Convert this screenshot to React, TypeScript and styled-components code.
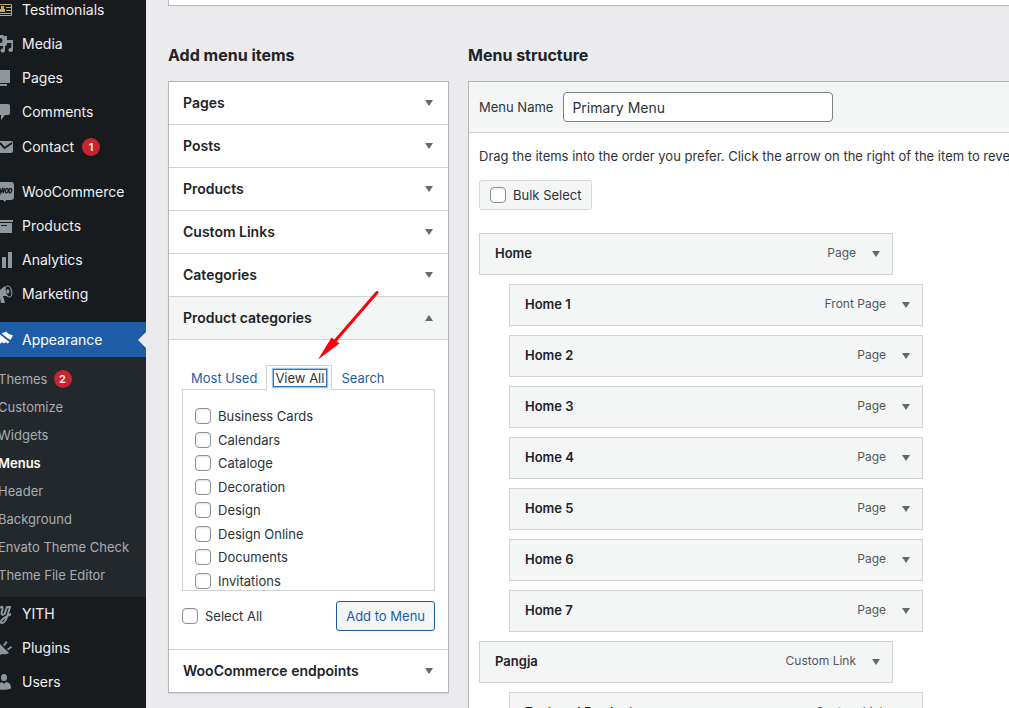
import React from "react";
import styled, { createGlobalStyle, css } from "styled-components";

const GlobalStyle = createGlobalStyle`
  * { box-sizing: border-box; }
  html, body, #root { height: 100%; }
  body {
    margin: 0;
    overflow: hidden;
    background: #ebebed;
    color: #2c3338;
    font: 13px/20px Inter, "Liberation Sans", sans-serif;
  }
  button, input { font: inherit; color: inherit; }
  ul, h2, h3, p { margin: 0; padding: 0; }
  ul { list-style: none; }
`;

const Page = styled.div`
  display: flex;
  height: 100vh;
  overflow: hidden;
`;

const Sidebar = styled.nav`
  flex: none;
  width: 146px;
  margin-top: -7px;
  background: #171b1e;
  overflow: hidden;
`;

const MenuGroup = styled.ul`
  padding-bottom: 11px;
`;

const MenuLink = styled.a<{ $current?: boolean; $tall?: boolean }>`
  position: relative;
  display: flex;
  align-items: center;
  gap: 8px;
  height: ${(p) => (p.$current || p.$tall ? 35 : 34)}px;
  color: ${(p) => (p.$current ? "#fff" : "#f0f0f1")};
  background: ${(p) => (p.$current ? "#1e5da6" : "transparent")};
  font-size: 14px;
  text-decoration: none;
  ${(p) =>
    p.$current &&
    css`
      &::after {
        content: "";
        position: absolute;
        right: 0;
        border: 8px solid transparent;
        border-left: 0;
        border-right-color: #ebebed;
      }
    `}
`;

const MenuIcon = styled.svg`
  flex: none;
  width: 14px;
  height: 20px;
  fill: #8f979e;
`;

const Count = styled.span`
  min-width: 18px;
  height: 18px;
  border-radius: 9px;
  background: #ca2330;
  color: #fff;
  font-size: 11px;
  font-weight: 600;
  line-height: 18px;
  text-align: center;
`;

const Submenu = styled.ul`
  padding: 8px 0;
  background: #23282c;
`;

const SubLink = styled.a<{ $current?: boolean }>`
  display: flex;
  align-items: center;
  gap: 6px;
  height: 28px;
  margin-left: -2px;
  color: ${(p) => (p.$current ? "#fff" : "#a9adb2")};
  font-weight: ${(p) => (p.$current ? 600 : 400)};
  text-decoration: none;
  white-space: nowrap;
`;

const Content = styled.main`
  flex: 1;
  min-width: 0;
  padding-left: 22px;
`;

const Notice = styled.div`
  height: 6px;
  background: #fff;
  border: 1px solid #b4b6b9;
  border-width: 0 0 1px 1px;
`;

const Columns = styled.div`
  display: grid;
  grid-template-columns: 281px minmax(0, 1fr);
  column-gap: 19px;
  padding-top: 37px;
`;

const Title = styled.h2`
  margin-bottom: 14px;
  color: #1d2327;
  font-size: 16px;
  font-weight: 700;
  line-height: 24px;
`;

const Accordion = styled.div`
  background: #fff;
  border: 1px solid #b4b6b9;
  box-shadow: 0 1px 1px rgba(0, 0, 0, 0.1);
`;

const Section = styled.section`
  & + & { border-top: 1px solid #d0d2d4; }
`;

const SectionButton = styled.button<{ $open?: boolean }>`
  display: flex;
  align-items: center;
  justify-content: space-between;
  width: 100%;
  height: 42px;
  padding: 0 15px 0 14px;
  border: 0;
  background: ${(p) => (p.$open ? "#f4f6f6" : "#fff")};
  color: #1d2327;
  font-size: 14px;
  font-weight: 600;
  text-align: left;
`;

const Arrow = styled.span<{ $up?: boolean }>`
  flex: none;
  width: 0;
  border: solid transparent;
  border-width: ${(p) => (p.$up ? "0 4px 6px" : "6px 4px 0")};
  border-${(p) => (p.$up ? "bottom" : "top")}-color: #646970;
`;

const SectionBody = styled.div`
  padding: 25px 13px 18px;
  border-top: 1px solid #d0d2d4;
`;

const TabBar = styled.div`
  position: relative;
  display: flex;
  align-items: flex-end;
  margin-bottom: -1px;
`;

const Tab = styled.button<{ $active?: boolean }>`
  position: relative;
  height: 25px;
  padding: 0 8px 1px;
  border: 1px solid transparent;
  border-bottom: 0;
  background: none;
  color: #1e5da6;
  ${(p) =>
    p.$active &&
    css`
      padding: 0 4px 1px 6px;
      border-color: #d0d2d4;
      background: #fff;
      color: #2c3338;
    `}
`;

const FocusRing = styled.span`
  display: block;
  padding: 0 2px 0 1px;
  border: 1px solid #2f74cc;
  box-shadow: 0 0 1px 1px #9cc0ea;
  line-height: 16px;
`;

const CheckPanel = styled.ul`
  height: 202px;
  padding: 16px 12px 0;
  border: 1px solid #d0d2d4;
  overflow: hidden;
`;

const CheckRow = styled.li`
  height: 24px;
  &:nth-child(even) { height: 23px; }
`;

const CheckLabel = styled.label`
  display: flex;
  align-items: center;
  gap: 7px;
`;

const Checkbox = styled.input.attrs({ type: "checkbox" })`
  appearance: none;
  flex: none;
  width: 16px;
  height: 16px;
  margin: 0;
  border: 1px solid #8c8f94;
  border-radius: 4px;
  background: #fff;
  box-shadow: inset 0 1px 2px rgba(0, 0, 0, 0.1);
`;

const Actions = styled.div`
  display: flex;
  align-items: center;
  justify-content: space-between;
  margin-top: 10px;
`;

const AddButton = styled.button`
  height: 30px;
  padding: 0 9px;
  border: 1px solid #1e5da6;
  border-radius: 3px;
  background: #f4f6f6;
  color: #1e5da6;
`;

const Editor = styled.div`
  border: 1px solid #b4b6b9;
  border-right: 0;
  background: #fff;
`;

const EditorHeader = styled.label`
  display: flex;
  align-items: center;
  gap: 10px;
  height: 51px;
  padding-left: 10px;
  border-bottom: 1px solid #d0d2d4;
  background: #f4f6f6;
`;

const NameInput = styled.input`
  width: 270px;
  height: 30px;
  padding: 0 8px;
  border: 1px solid #7d8187;
  border-radius: 4px;
  background: #fff;
  color: #2c3338;
  font-size: 14px;
`;

const EditorBody = styled.div`
  padding: 13px 0 0 10px;
`;

const Hint = styled.p`
  white-space: nowrap;
`;

const BulkSelect = styled.label`
  display: inline-flex;
  align-items: center;
  gap: 7px;
  height: 30px;
  margin: 14px 0 23px;
  padding: 0 10px;
  border: 1px solid #d6d8da;
  border-radius: 3px;
  background: #f4f6f6;
`;

const ItemList = styled.ul`
  display: flex;
  flex-direction: column;
  gap: 9px;
`;

const Item = styled.li<{ $child?: boolean }>`
  display: flex;
  align-items: center;
  gap: 16px;
  width: 414px;
  height: 42px;
  margin-left: ${(p) => (p.$child ? 30 : 0)}px;
  padding: 0 12px 2px 15px;
  border: 1px solid #d0d2d4;
  background: #f4f6f6;
  color: #50575e;
  font-size: 12px;
`;

const ItemTitle = styled.h3`
  flex: 1;
  color: #1d2327;
  font-size: 13px;
  font-weight: 600;
`;

const ItemToggle = styled.button`
  display: flex;
  padding: 1px 0 0;
  border: 0;
  background: none;
`;

const Pointer = styled.svg`
  position: absolute;
  left: 134px;
  bottom: 29px;
  width: 64px;
  height: 71px;
  fill: #fb0007;
  stroke: #fb0007;
  pointer-events: none;
`;

const icons: Record<string, React.ReactNode> = {
  testimonials: (
    <g fill="none" stroke="#c9a95a" strokeWidth="1">
      <path d="M0 4.500H11.500V15.500H0M6 7.500H11M6 10.500H11M0 13.500H11" />
      <path d="M0 11V9h1V6h3v3h1v3H0z" fill="#c9a95a" stroke="none" />
    </g>
  ),
  media: (
    <>
      <path d="M0 1h3l1 1h3v8l-1 2H0V9a2.500 2.500 0 0 0 0-5z" />
      <path d="M7.500 6H13v10a2.300 2 0 1 1-1.700-2V9H9.200l-3 0V6zM3 12h2v5a2.300 2 0 1 1-2-2.500z" />
    </>
  ),
  pages: <path d="M0 2h10v13H0zM0 16h7v2H0z" />,
  comments: <path d="M0 2h8q2 0 2 2v7q0 2-2 2H5l-4 5v-5H0z" />,
  contact: (
    <>
      <path d="M0 4h11q2 0 2 2v8q0 2-2 2H0z" />
      <path d="M0 6l4.500 5L12 6" fill="none" stroke="#171b1e" strokeWidth="2" />
    </>
  ),
  woo: (
    <>
      <path d="M0 0h11q3 0 3 3v12q0 3-3 3H6l-1 2-2-2H0z" />
      <path
        d="M0 6l.8 5 1.700-4 .8 4L4.500 6M6.800 6.500q1.600 0 1.400 2T6.500 11q-1.300-.2-1-2.300t1.300-2.200M10.300 6.500q1.600 0 1.400 2T10 11q-1.300-.2-1-2.300t1.300-2.200"
        fill="none"
        stroke="#171b1e"
        strokeWidth="1.300"
      />
    </>
  ),
  products: <path d="M0 4h13v2H0zM0 7h12v10H0zM1 9v1h6V9z" fillRule="evenodd" />,
  analytics: <path d="M2 7h4v11H2zM8 2h4v16H8z" />,
  marketing: (
    <>
      <path d="M0 6l5-4q-1 6 3 10l-5 0 2 7H1l-1-5z" />
      <ellipse cx="8.500" cy="7.500" rx="3.200" ry="5.600" fill="none" stroke="#8f979e" strokeWidth="1.200" transform="rotate(-12 8.500 7.500)" />
      <ellipse cx="7.800" cy="7.500" rx="1.500" ry="2.200" />
    </>
  ),
  appearance: (
    <g fill="#fff">
      <path d="M1.500 3.500L6 1.500l2.500 2.300L13 5.500 10.500 10 8 8.500z" />
      <path d="M0 4.500l9.500 7.500-2 1.500-2-1.500-1.500 1.500L2 12l-2 2z" />
    </g>
  ),
  yith: (
    <path
      d="M0 4q3-3 2.500 1L1.500 9q0 3 3 1L7 3h3L7 13q-2 6-5 6-2 0-1-2 2-3 10-7"
      fill="none"
      stroke="#8f979e"
      strokeWidth="2"
    />
  ),
  plugins: <path d="M0 6l9 9q-3 2-7 1l-2 1zM3 7l3-4 1.500 1L5 8zM7 11l4-3 1 1.500-4 3z" />,
  users: (
    <>
      <ellipse cx="4" cy="5.500" rx="3" ry="3.500" />
      <path d="M0 11l2-1 2 2 2-2q5 0 5 6.500-5 2-11 1z" />
    </>
  ),
};

type Entry = { icon: string; label: string; count?: number; current?: boolean };

const groups: Entry[][] = [
  [
    { icon: "testimonials", label: "Testimonials" },
    { icon: "media", label: "Media" },
    { icon: "pages", label: "Pages" },
    { icon: "comments", label: "Comments" },
    { icon: "contact", label: "Contact", count: 1 },
  ],
  [
    { icon: "woo", label: "WooCommerce" },
    { icon: "products", label: "Products" },
    { icon: "analytics", label: "Analytics" },
    { icon: "marketing", label: "Marketing" },
  ],
];

const appearance = ["Themes", "Customize", "Widgets", "Menus", "Header", "Background", "Envato Theme Check", "Theme File Editor"];

const lastGroup: Entry[] = [
  { icon: "yith", label: "YITH" },
  { icon: "plugins", label: "Plugins" },
  { icon: "users", label: "Users" },
];

const categories = ["Business Cards", "Calendars", "Cataloge", "Decoration", "Design", "Design Online", "Documents", "Invitations"];

const items = [
  { title: "Home", type: "Page" },
  { title: "Home 1", type: "Front Page", child: true },
  ...[2, 3, 4, 5, 6, 7].map((n) => ({ title: `Home ${n}`, type: "Page", child: true })),
  { title: "Pangja", type: "Custom Link" },
  { title: "Featured Product", type: "Custom Link", child: true },
];

const MenuItem = ({ icon, label, count, current }: Entry) => (
  <MenuLink href="#" $current={current} $tall={count !== undefined}>
    <MenuIcon viewBox="0 0 14 20" aria-hidden="true">{icons[icon]}</MenuIcon>
    {label}
    {count && <Count>{count}</Count>}
  </MenuLink>
);

const MenuList = ({ entries }: { entries: Entry[] }) => (
  <MenuGroup>
    {entries.map((entry) => (
      <li key={entry.label}>
        <MenuItem {...entry} />
      </li>
    ))}
  </MenuGroup>
);

const Check = ({ label }: { label: string }) => (
  <CheckLabel>
    <Checkbox />
    {label}
  </CheckLabel>
);

const ClosedSection = ({ title }: { title: string }) => (
  <Section>
    <SectionButton aria-expanded="false">
      {title}
      <Arrow />
    </SectionButton>
  </Section>
);

export default function App() {
  return (
    <Page>
      <GlobalStyle />
      <Sidebar>
        {groups.map((group) => (
          <MenuList key={group[0].label} entries={group} />
        ))}
        <MenuItem icon="appearance" label="Appearance" current />
        <Submenu>
          {appearance.map((label) => (
            <li key={label}>
              <SubLink href="#" $current={label === "Menus"}>
                {label}
                {label === "Themes" && <Count>2</Count>}
              </SubLink>
            </li>
          ))}
        </Submenu>
        <MenuList entries={lastGroup} />
      </Sidebar>
      <Content>
        <Notice />
        <Columns>
          <div>
            <Title>Add menu items</Title>
            <Accordion>
              {["Pages", "Posts", "Products", "Custom Links", "Categories"].map((title) => (
                <ClosedSection key={title} title={title} />
              ))}
              <Section>
                <SectionButton $open aria-expanded="true">
                  Product categories
                  <Arrow $up />
                </SectionButton>
                <SectionBody>
                  <TabBar>
                    <Tab>Most Used</Tab>
                    <Tab $active>
                      <FocusRing>View All</FocusRing>
                    </Tab>
                    <Tab>Search</Tab>
                    <Pointer viewBox="0 0 64 71" aria-hidden="true">
                      <path d="M61 2.500L19 51" strokeWidth="3" strokeLinecap="round" />
                      <path d="M2 69.500L15.500 47.500 23.500 53.500z" stroke="none" />
                    </Pointer>
                  </TabBar>
                  <CheckPanel>
                    {categories.map((category) => (
                      <CheckRow key={category}>
                        <Check label={category} />
                      </CheckRow>
                    ))}
                  </CheckPanel>
                  <Actions>
                    <Check label="Select All" />
                    <AddButton>Add to Menu</AddButton>
                  </Actions>
                </SectionBody>
              </Section>
              <ClosedSection title="WooCommerce endpoints" />
            </Accordion>
          </div>
          <div>
            <Title>Menu structure</Title>
            <Editor>
              <EditorHeader>
                Menu Name
                <NameInput defaultValue="Primary Menu" />
              </EditorHeader>
              <EditorBody>
                <Hint>
                  Drag the items into the order you prefer. Click the arrow on the right of the item to reveal additional
                  configuration options.
                </Hint>
                <BulkSelect>
                  <Checkbox />
                  Bulk Select
                </BulkSelect>
                <ItemList>
                  {items.map((item) => (
                    <Item key={item.title} $child={"child" in item}>
                      <ItemTitle>{item.title}</ItemTitle>
                      {item.type}
                      <ItemToggle aria-label={`Edit ${item.title}`}>
                        <Arrow />
                      </ItemToggle>
                    </Item>
                  ))}
                </ItemList>
              </EditorBody>
            </Editor>
          </div>
        </Columns>
      </Content>
    </Page>
  );
}
